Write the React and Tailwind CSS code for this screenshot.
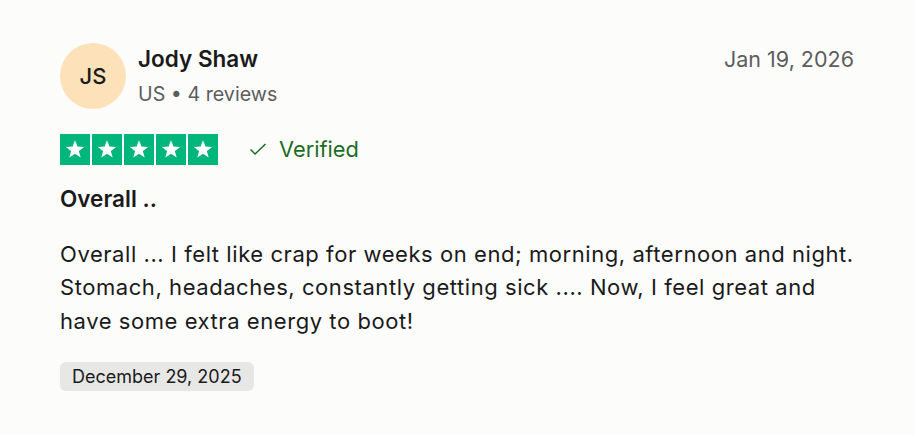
const Star = () => (
  <div className="w-[30px] h-[31px] bg-[#00b67a] flex items-center justify-center">
    <svg width="22" height="22" viewBox="0 0 24 24">
      <path d="M12 2.5l2.6 6.9 7.4.3-5.8 4.6 2 7.1L12 17.3l-6.2 4.1 2-7.1L2 9.7l7.4-.3z" fill="#fff" />
    </svg>
  </div>
);

export default function App() {
  return (
    <div className="w-[914px] h-[435px] bg-[#fcfcfb] font-['Inter',sans-serif] text-[#1a1a1a] pl-[60px] pr-[60px] pt-[43px]">
      <div className="flex items-start justify-between">
        <div className="flex items-center gap-3">
          <div className="w-[66px] h-[66px] rounded-full bg-[#fde1b9] flex items-center justify-center text-[22px] font-medium text-[#1a1a1a]">
            JS
          </div>
          <div className="flex flex-col">
            <span className="text-[22.5px] font-semibold leading-[30px]">Jody Shaw</span>
            <span className="text-[19.7px] text-[#5d5d5d] leading-[30px] mt-[5px]">US • 4 reviews</span>
          </div>
        </div>
        <span className="text-[21.5px] text-[#5d5d5d] leading-[30px] mt-[1px]">Jan 19, 2026</span>
      </div>

      <div className="flex items-center mt-[24px]">
        <div className="flex gap-[2px]">
          <Star /><Star /><Star /><Star /><Star />
        </div>
        <svg className="ml-[30px]" width="20" height="20" viewBox="0 0 24 24" fill="none" stroke="#1c6d24" strokeWidth="1.8">
          <path d="M3 12.5l5.5 5.5L21 6" />
        </svg>
        <span className="ml-[11px] text-[21.8px] text-[#1c6d24]">Verified</span>
      </div>

      <div className="mt-[18px] text-[22.5px] font-semibold leading-[30px]">Overall ..</div>

      <p className="mt-[24px] text-[22px] leading-[33.5px] tracking-[0.56px] w-[800px]">
        Overall ... I felt like crap for weeks on end; morning, afternoon and night. Stomach, headaches, constantly getting sick .... Now, I feel great and have some extra energy to boot!
      </p>

      <div className="mt-[24px] inline-block bg-[#e7e7e6] rounded-md px-[12px] py-[4px] text-[18px] leading-[21px]">
        December 29, 2025
      </div>
    </div>
  );
}
